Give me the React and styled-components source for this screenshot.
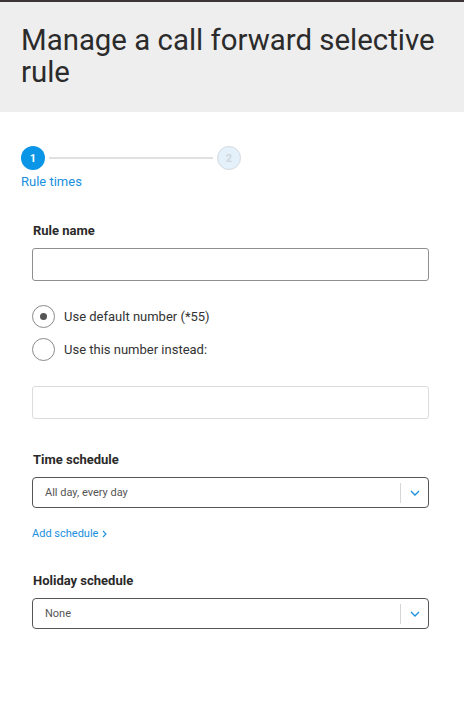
import React from "react";
import styled, { createGlobalStyle } from "styled-components";

const Global = createGlobalStyle`
  body {
    margin: 0;
    background: #fff;
    font-family: Roboto, "Liberation Sans", sans-serif;
    color: #333;
  }
`;

const Page = styled.div`
  width: 464px;
  min-height: 727px;
  border-top: 2px solid #3d3535;
  box-sizing: border-box;
`;

const Header = styled.div`
  background: #eeeeee;
  padding: 22px 8px 24px 21px;
`;

const Title = styled.h1`
  margin: 0;
  font-size: 29.4px;
  line-height: 32px;
  font-weight: 400;
  color: #2b2b2b;
`;

const Stepper = styled.div`
  padding: 34px 21px 0;
`;

const StepRow = styled.div`
  display: flex;
  align-items: center;
`;

const Step = styled.div`
  width: 24px;
  height: 24px;
  border-radius: 50%;
  box-sizing: border-box;
  display: flex;
  align-items: center;
  justify-content: center;
  font-size: 11px;
  font-weight: 700;
  background: ${(p) => (p.$active ? "#0a95e6" : "#e4f0fa")};
  color: ${(p) => (p.$active ? "#fff" : "#cfd6dc")};
  border: ${(p) => (p.$active ? "none" : "1px solid #d4dadf")};
`;

const StepLine = styled.div`
  width: 164px;
  height: 2px;
  background: #e0e0e0;
  margin: 0 4px;
`;

const StepLabel = styled.div`
  margin-top: 4px;
  font-size: 13px;
  color: #1a8fdd;
`;

const Form = styled.div`
  padding: 34px 35px 0 32px;
  display: flex;
  flex-direction: column;
`;

const Label = styled.div`
  font-size: 13px;
  font-weight: 700;
  color: #2a2a2a;
  margin-bottom: 10px;
  margin-left: 1px;
`;

const Input = styled.div`
  height: 33px;
  box-sizing: border-box;
  border: 1px solid ${(p) => (p.$light ? "#dcdcdc" : "#8f8f8f")};
  border-radius: 3px;
  background: #fff;
`;

const RadioGroup = styled.div`
  display: flex;
  flex-direction: column;
  gap: 10px;
  margin-top: 24px;
`;

const RadioRow = styled.div`
  display: flex;
  align-items: center;
  gap: 9px;
  font-size: 13px;
  color: #333;
`;

const Radio = styled.div`
  width: 23px;
  height: 23px;
  box-sizing: border-box;
  border-radius: 50%;
  border: 1px solid #8a8a8a;
  display: flex;
  align-items: center;
  justify-content: center;
  &::after {
    content: "";
    display: ${(p) => (p.$checked ? "block" : "none")};
    width: 7px;
    height: 7px;
    border-radius: 50%;
    background: #555;
  }
`;

const Section = styled.div`
  margin-top: ${(p) => p.$top || 0}px;
`;

const Select = styled.div`
  height: 31px;
  box-sizing: border-box;
  border: 1px solid #555;
  border-radius: 4px;
  display: flex;
  align-items: center;
  padding-left: 12px;
  font-size: 11px;
  color: #555;
`;

const SelectText = styled.span`
  flex: 1;
`;

const Divider = styled.div`
  width: 1px;
  height: 20px;
  background: #d6d6d6;
`;

const Chevron = styled.div`
  width: 27px;
  display: flex;
  align-items: center;
  justify-content: center;
`;

const Link = styled.div`
  margin-top: 19px;
  font-size: 11px;
  color: #1a8fdd;
  display: flex;
  align-items: center;
  gap: 4px;
`;

const Down = () => (
  <svg width="10" height="6" viewBox="0 0 10 6" fill="none">
    <path d="M1 1l4 4 4-4" stroke="#1a8fdd" strokeWidth="1.3" />
  </svg>
);

const Right = () => (
  <svg width="5" height="8" viewBox="0 0 5 8" fill="none">
    <path d="M1 1l3 3-3 3" stroke="#1a8fdd" strokeWidth="1.1" />
  </svg>
);

function Dropdown({ value }) {
  return (
    <Select>
      <SelectText>{value}</SelectText>
      <Divider />
      <Chevron>
        <Down />
      </Chevron>
    </Select>
  );
}

export default function App() {
  return (
    <>
      <Global />
      <Page>
        <Header>
          <Title>Manage a call forward selective rule</Title>
        </Header>
        <Stepper>
          <StepRow>
            <Step $active>1</Step>
            <StepLine />
            <Step>2</Step>
          </StepRow>
          <StepLabel>Rule times</StepLabel>
        </Stepper>
        <Form>
          <Label>Rule name</Label>
          <Input />
          <RadioGroup>
            <RadioRow>
              <Radio $checked />
              Use default number (*55)
            </RadioRow>
            <RadioRow>
              <Radio />
              Use this number instead:
            </RadioRow>
          </RadioGroup>
          <Section $top={25}>
            <Input $light />
          </Section>
          <Section $top={33}>
            <Label>Time schedule</Label>
            <Dropdown value="All day, every day" />
            <Link>
              Add schedule <Right />
            </Link>
          </Section>
          <Section $top={33}>
            <Label>Holiday schedule</Label>
            <Dropdown value="None" />
          </Section>
        </Form>
      </Page>
    </>
  );
}
